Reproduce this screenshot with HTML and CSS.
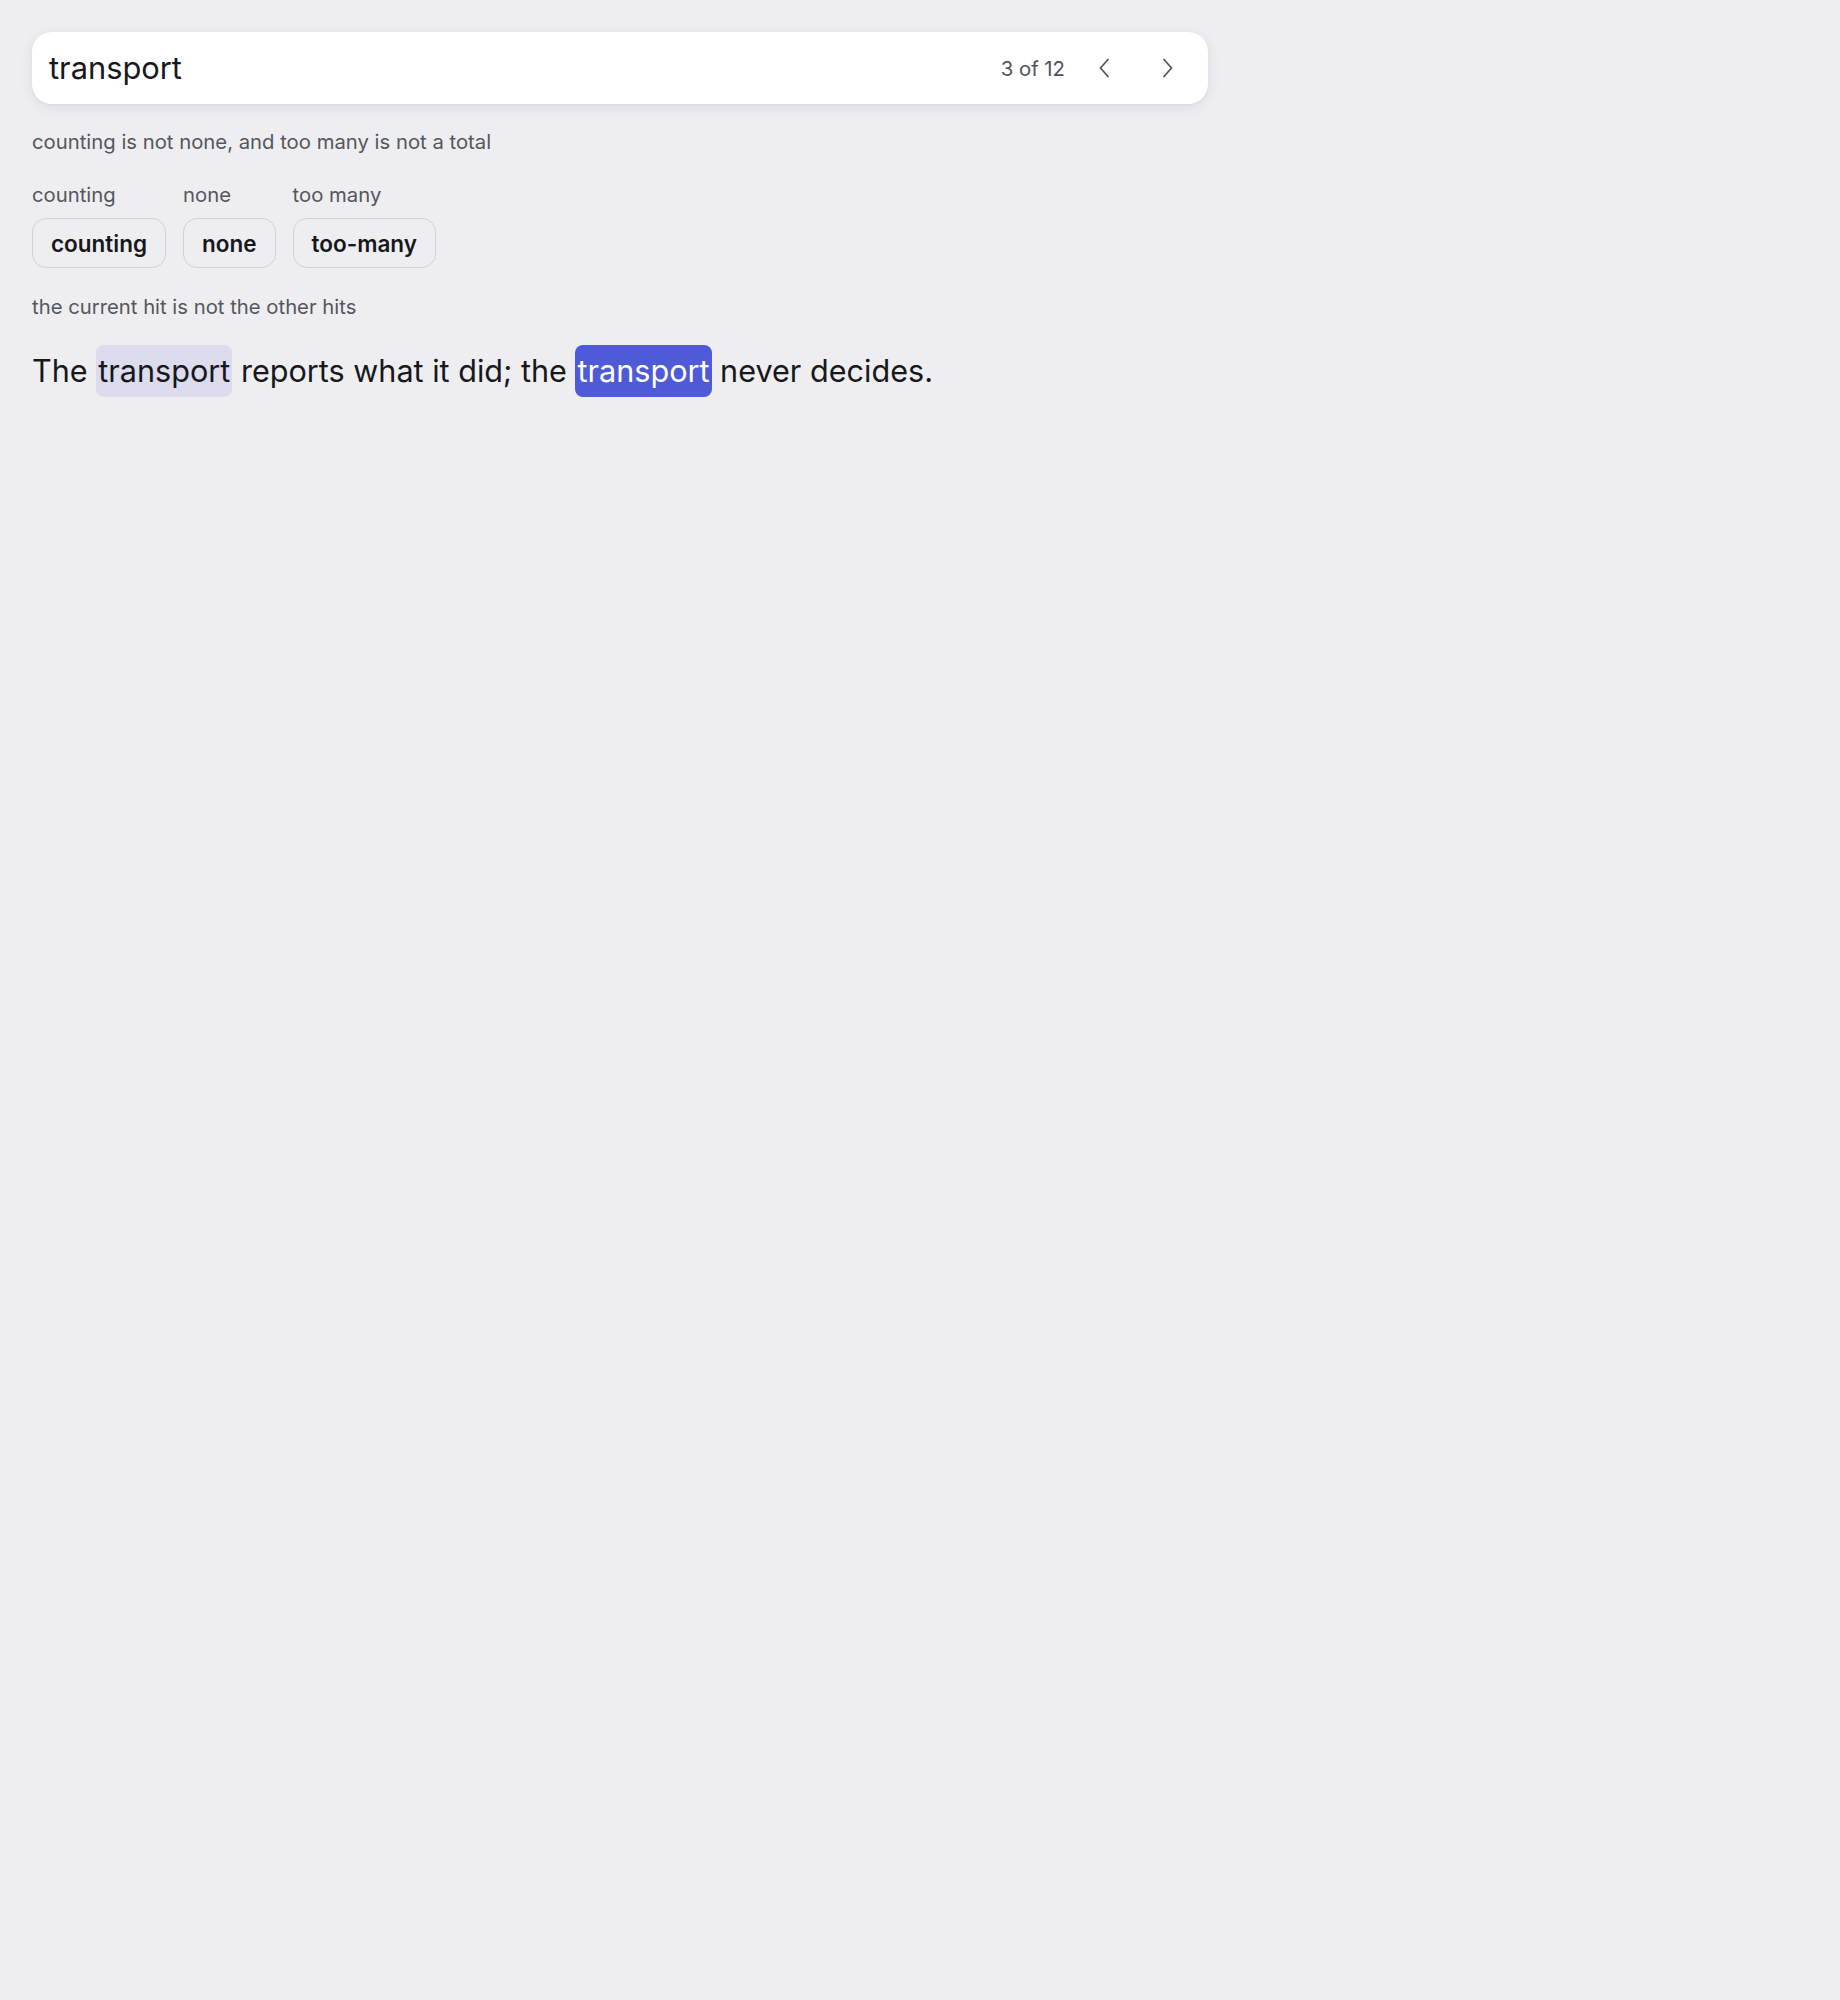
FILE: index.html
```html
<!DOCTYPE html>
<html lang="en">
<head>
<meta charset="utf-8">
<title>Find</title>
<link rel="stylesheet" href="styles.css">
</head>
<body>
<main class="page">
  <div class="search">
    <span class="query">transport</span>
    <div class="nav">
      <span class="count">3 of 12</span>
      <button class="navbtn" aria-label="Previous">
        <svg width="12" height="20" viewBox="0 0 12 20"><polyline points="10,1.5 2.5,10 10,18.5" fill="none" stroke="currentColor" stroke-width="1.7" stroke-linecap="round" stroke-linejoin="round"/></svg>
      </button>
      <button class="navbtn" aria-label="Next">
        <svg width="12" height="20" viewBox="0 0 12 20"><polyline points="2,1.5 9.5,10 2,18.5" fill="none" stroke="currentColor" stroke-width="1.7" stroke-linecap="round" stroke-linejoin="round"/></svg>
      </button>
    </div>
  </div>

  <p class="note">counting is not none, and too many is not a total</p>

  <div class="states">
    <div class="state">
      <span class="label">counting</span>
      <span class="chip">counting</span>
    </div>
    <div class="state">
      <span class="label">none</span>
      <span class="chip">none</span>
    </div>
    <div class="state">
      <span class="label">too many</span>
      <span class="chip">too-many</span>
    </div>
  </div>

  <p class="note note-2">the current hit is not the other hits</p>

  <p class="sentence">The <mark class="hit">transport</mark> reports what it did; the <mark class="hit current">transport</mark> never decides.</p>
</main>
</body>
</html>
```
FILE: styles.css
```css
* { box-sizing: border-box; }
html, body { margin: 0; }
body {
  background: #eeeef1;
  font-family: Inter, "Noto Sans", sans-serif;
  color: #17171c;
  min-height: 2000px;
}
.page {
  padding: 32px;
  width: 1240px;
}
.search {
  display: flex;
  align-items: center;
  justify-content: space-between;
  width: 1176px;
  height: 72px;
  background: #ffffff;
  border-radius: 20px;
  padding: 0 18px 0 17px;
  box-shadow: 0 3px 14px rgba(20, 20, 40, 0.08), 0 1px 3px rgba(20, 20, 40, 0.04);
}
.query {
  font-size: 30.8px;
  line-height: 1;
  color: #17171c;
}
.nav {
  display: flex;
  align-items: center;
  gap: 20px;
}
.count {
  font-size: 20.3px;
  color: #52525b;
  margin-right: -3px;
}
.navbtn {
  width: 44px;
  height: 44px;
  border: 0;
  background: transparent;
  color: #52525b;
  display: flex;
  align-items: center;
  justify-content: center;
  padding: 0;
  cursor: pointer;
}
.note {
  margin: 23px 0 0;
  font-size: 20.3px;
  line-height: 30px;
  color: #55565e;
}
.states {
  display: flex;
  gap: 17px;
  margin-top: 24px;
}
.state {
  display: flex;
  flex-direction: column;
  align-items: flex-start;
  gap: 9px;
}
.label {
  font-size: 20.3px;
  line-height: 28px;
  color: #55565e;
}
.chip {
  display: inline-flex;
  align-items: center;
  height: 50px;
  padding: 0 18px;
  border: 1.6px solid #d0d0d6;
  border-radius: 14px;
  font-size: 22.5px;
  font-weight: 600;
  color: #17171c;
}
.note-2 {
  margin-top: 24px;
}
.sentence {
  margin: 23px 0 0;
  font-size: 30.6px;
  line-height: 52px;
  color: #17171c;
}
.hit {
  display: inline-block;
  background: #dcdcee;
  color: #17171c;
  border-radius: 8px;
  padding: 0 2px;
  line-height: 52px;
}
.hit.current {
  background: #4f5ad6;
  color: #ffffff;
}
```
